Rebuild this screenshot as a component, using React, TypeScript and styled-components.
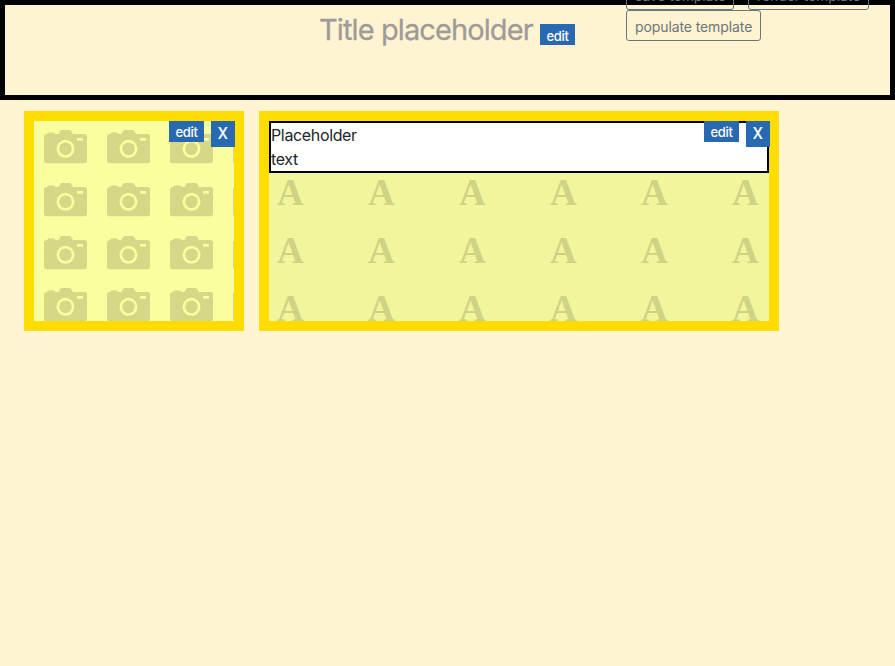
import React from "react";
import styled, { createGlobalStyle } from "styled-components";

const GlobalStyle = createGlobalStyle`
  *, *::before, *::after { box-sizing: border-box; }
  html, body { margin: 0; height: 100%; overflow: hidden; background: #fff4d2; }
  body {
    color: #212529;
    font-family: Inter, Roboto, "Liberation Sans", sans-serif;
    font-size: 16px;
    line-height: 24px;
  }
`;

const Page = styled.main`
  height: 666px;
  overflow: hidden;
`;

const Header = styled.header`
  display: grid;
  grid-template-columns: 315px 306px 264px;
  height: 100px;
  border: 5px solid;
  border-color: #000 #010101;
`;

const TitleArea = styled.div`
  grid-column: 2;
  display: flex;
  align-items: flex-start;
`;

const Title = styled.h1`
  width: 220px;
  margin: 7px 0 0;
  color: #a09b9b;
  font-size: 29px;
  font-weight: 400;
  line-height: 36px;
  letter-spacing: -0.9px;
  text-indent: -1px;
  white-space: nowrap;
  -webkit-text-stroke: 0.3px #a09b9b;
`;

const Actions = styled.div`
  display: flex;
  flex-wrap: wrap;
  align-content: flex-start;
  column-gap: 14px;
  height: 62px;
  margin-top: -26px;
`;

const ActionButton = styled.button<{ $width: number; $drop: number }>`
  width: ${(p) => p.$width}px;
  height: 31px;
  padding: ${(p) => 4 + p.$drop}px 0 ${(p) => 4 - p.$drop}px 8px;
  border: 1px solid #6c757d;
  border-radius: 3px;
  background: transparent;
  color: #6c757d;
  font: 400 14px/21px Inter, sans-serif;
  letter-spacing: -0.1px;
  text-align: left;
  white-space: nowrap;
`;

const EditButton = styled.button<{ $top?: number }>`
  width: 35px;
  height: 21px;
  margin: ${(p) => p.$top ?? 0}px 0 0;
  padding: ${(p) => (p.$top ? 2 : 1)}px 0 0;
  border: 0;
  background: #2869b1;
  color: #fff;
  font: 500 13px/20px Inter, sans-serif;
  letter-spacing: -0.3px;
`;

const CloseButton = styled.button`
  width: 23.5px;
  height: 26px;
  padding: 0;
  border: 0;
  background: #2869b1;
  color: #fff;
  font: 400 16px/24px Roboto, sans-serif;
  -webkit-text-stroke: 0.2px #fff;
`;

const Board = styled.section`
  display: flex;
  gap: 15px;
  padding: 11px 24px;
`;

const Panel = styled.article<{ $width: number; $fill: string }>`
  display: grid;
  grid-template: 200px / minmax(0, 1fr);
  width: ${(p) => p.$width}px;
  height: 220px;
  border: 10px solid;
  border-color: #ffdc00 #ffdd00;
  background: ${(p) => p.$fill};
  & > * { grid-area: 1 / 1; }
`;

const CameraGrid = styled.div`
  display: grid;
  grid-template-columns: repeat(4, 63px);
  grid-template-rows: 53px 53px 52px 53px;
  overflow: hidden;
`;

const Camera = styled.svg`
  display: block;
  width: 43px;
  height: 34px;
  margin: 9px 0 0 10px;
`;

const LetterGrid = styled.div`
  display: grid;
  grid-template-columns: repeat(6, 91px);
  grid-template-rows: repeat(3, 58px);
  padding-top: 52px;
  overflow: hidden;
`;

const Letter = styled.span`
  padding-left: 8px;
  color: #d0d286;
  font: 700 37px/40px "Liberation Serif", serif;
`;

const Controls = styled.div`
  display: flex;
  justify-content: flex-end;
  align-items: flex-start;
  gap: 7px;
  margin-right: -0.5px;
  z-index: 1;
`;

const TextBox = styled.div`
  align-self: start;
  height: 52px;
  border: 2px solid #000;
  background: #fff;
`;

const TextContent = styled.p`
  width: 100px;
  margin: 0;
  letter-spacing: -0.35px;
`;

const CameraIcon = () => (
  <Camera viewBox="0 0 43 34" aria-hidden="true">
    <path
      fill="#d5d886"
      fillRule="evenodd"
      d="M3 4 4.5 2.5H10L11.5 4H14.5L16.3 .8Q16.8 0 17.8 0H25.5Q26.5 0 27 .8L29 4H40.5Q43 4 43 6.5V31Q43 33.3 40.5 33.3H2.5Q0 33.3 0 31V6.5Q0 4.5 3 4ZM21.5 9.8A9 9 0 1 0 21.5 27.8 9 9 0 1 0 21.5 9.8ZM33 8V10.8H39V8Z"
    />
    <circle cx="21.5" cy="18.8" r="6.3" fill="#d5d886" />
  </Camera>
);

export default function App() {
  return (
    <Page>
      <GlobalStyle />
      <Header>
        <TitleArea>
          <Title>Title placeholder</Title>
          <EditButton $top={19}>edit</EditButton>
        </TitleArea>
        <Actions>
          <ActionButton $width={108} $drop={1}>save template</ActionButton>
          <ActionButton $width={121} $drop={1}>render template</ActionButton>
          <ActionButton $width={135} $drop={1}>populate template</ActionButton>
        </Actions>
      </Header>
      <Board>
        <Panel $width={220} $fill="#f9fe9e">
          <CameraGrid>
            {Array.from({ length: 16 }, (_, i) => (
              <CameraIcon key={i} />
            ))}
          </CameraGrid>
          <Controls>
            <EditButton>edit</EditButton>
            <CloseButton>X</CloseButton>
          </Controls>
        </Panel>
        <Panel $width={520} $fill="#f1f59b">
          <LetterGrid aria-hidden="true">
            {Array.from({ length: 18 }, (_, i) => (
              <Letter key={i}>A</Letter>
            ))}
          </LetterGrid>
          <TextBox>
            <TextContent>Placeholder text</TextContent>
          </TextBox>
          <Controls>
            <EditButton>edit</EditButton>
            <CloseButton>X</CloseButton>
          </Controls>
        </Panel>
      </Board>
    </Page>
  );
}
